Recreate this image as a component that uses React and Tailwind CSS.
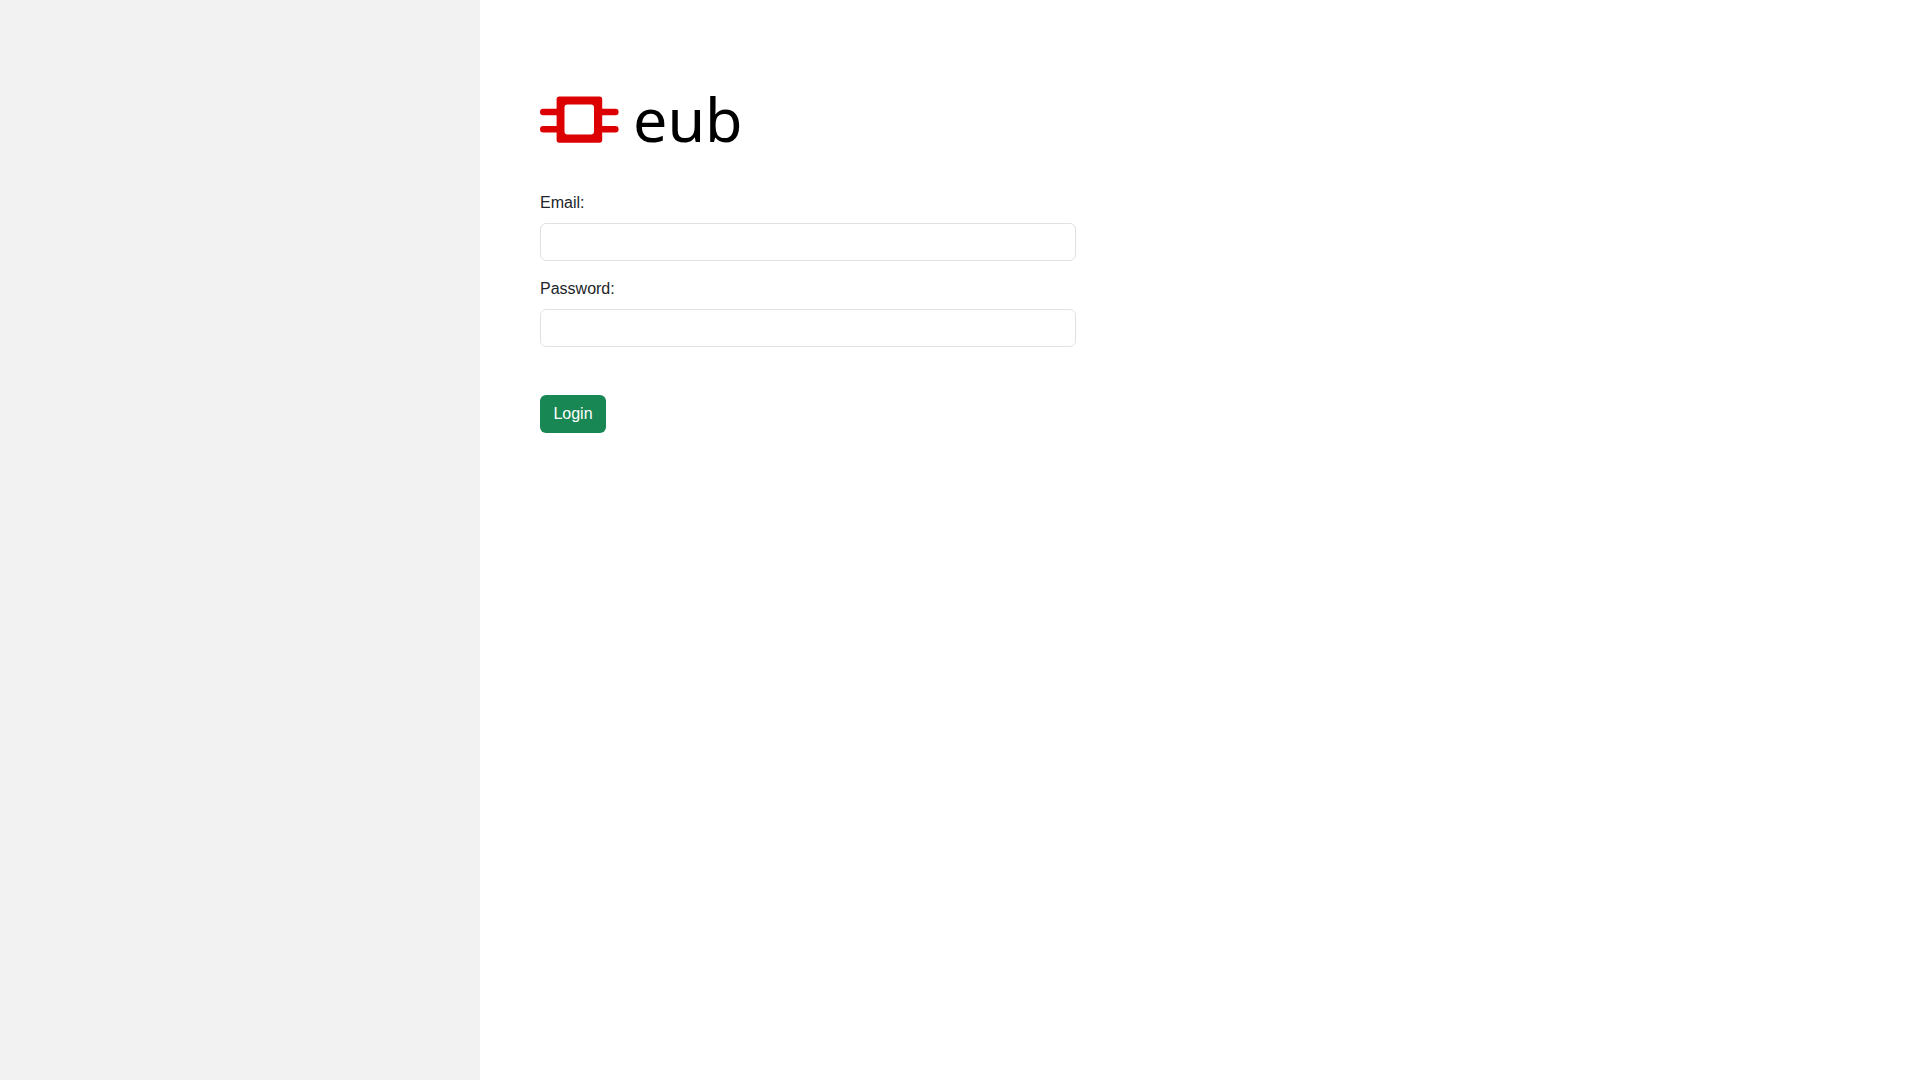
function Logo() {
  return (
    <div className="flex h-12 items-start gap-3.5">
      <svg viewBox="0 0 79 48" className="h-12 w-[79px] shrink-0" fill="none" aria-hidden="true">
        <path d="M3.2 16h14M3.2 33.2h14M61 16h14.4M61 33.2h14.4" stroke="#dd0000" strokeWidth="6.4" strokeLinecap="round" />
        <path
          fill="#dd0000"
          fillRule="evenodd"
          d="M19.4 0.4h40a2.8 2.8 0 0 1 2.8 2.8v40.8a2.8 2.8 0 0 1-2.8 2.8h-40a2.8 2.8 0 0 1-2.8-2.8v-40.8a2.8 2.8 0 0 1 2.8-2.8zM27.5 8.6a3 3 0 0 0-3 3v24a3 3 0 0 0 3 3h23.5a3 3 0 0 0 3-3v-24a3 3 0 0 0-3-3z"
        />
      </svg>
      <span className="font-['Noto_Sans',sans-serif] text-[61px] leading-[46px] text-black">eub</span>
    </div>
  )
}

function Field({ id, label, type }) {
  return (
    <div className="mb-4">
      <label htmlFor={id} className="mb-2 block">{label}</label>
      <input
        id={id}
        name={id}
        type={type}
        className="block h-[38px] w-full rounded-md border border-[#dee2e6] bg-white px-3 py-1.5 outline-none focus:border-[#86b7fe]"
      />
    </div>
  )
}

export default function App() {
  return (
    <div className="flex min-h-screen bg-white font-['Liberation_Sans',Arial,sans-serif] text-base text-[#212529]">
      <aside className="w-1/4 shrink-0 bg-[#f2f2f2]" />
      <main className="flex-1 px-[60px] pt-24">
        <Logo />
        <form className="mt-[47px] w-[calc(41.6667%-14px)]" onSubmit={(e) => e.preventDefault()}>
          <Field id="email" label="Email:" type="email" />
          <Field id="password" label="Password:" type="password" />
          <button type="submit" className="mt-8 h-[38px] min-w-[66px] rounded-md bg-[#198754] px-3 text-white hover:bg-[#157347]">
            Login
          </button>
        </form>
      </main>
    </div>
  )
}
